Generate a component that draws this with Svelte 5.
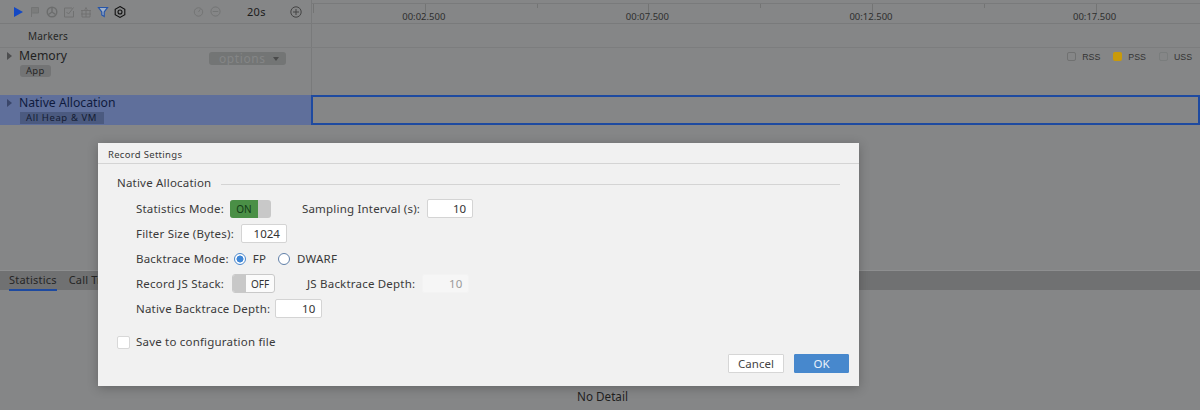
<script>
	const ticks = [0, 1, 2, 3, 4, 5, 6, 7];
	const times = ["00:02.500", "00:07.500", "00:12.500", "00:17.500"];
	const legend = [
		{ label: "RSS", cls: "rss" },
		{ label: "PSS", cls: "pss" },
		{ label: "USS", cls: "uss" },
	];
</script>

<div class="page">
	<div class="top">
		<div class="side toolbar">
			<svg class="ic" width="12" height="12" viewBox="0 0 12 12"><path d="M2 1 L11 6 L2 11 Z" fill="#1348c4" /></svg>
			<svg class="ic" width="12" height="12" viewBox="0 0 12 12"><path d="M2.5 11V1.5h7v5.5h-6" fill="#7b7c7c" stroke="#737474" /></svg>
			<svg class="ic" width="12" height="12" viewBox="0 0 12 12"><circle cx="6" cy="6" r="4.8" fill="none" stroke="#6c6d6d" stroke-width="1.4" /><path d="M6 1.5V6L9.5 8.5M6 6L2.5 8.5" stroke="#6c6d6d" stroke-width="1.4" fill="none" /></svg>
			<svg class="ic" width="12" height="12" viewBox="0 0 12 12"><path d="M9 2H1.5v9h9V5" fill="none" stroke="#707171" /><path d="M3.5 6l2 2L10.5 1.5" fill="none" stroke="#707171" /></svg>
			<svg class="ic" width="12" height="12" viewBox="0 0 12 12"><path d="M1 4.5h10M1 8h10M2 4.5V11h8V4.5M4.5 4.5L6 1.5l1.5 3M6 4.5V11" fill="none" stroke="#707171" stroke-width=".9" /></svg>
			<svg class="ic" width="12" height="12" viewBox="0 0 12 12"><path d="M1.5 1.5h9L7.2 6v4.5L4.8 9V6Z" fill="#9fb0c8" stroke="#2554a8" stroke-width="1.2" /></svg>
			<svg class="ic" width="12" height="12" viewBox="0 0 12 12"><path d="M6 .6L10.8 3.3V8.7L6 11.4L1.2 8.7V3.3Z" fill="none" stroke="#111" stroke-width="1.1" /><circle cx="6" cy="6" r="2" fill="none" stroke="#111" stroke-width="1.1" /></svg>
			<div class="zoom">
				<svg width="11" height="11" viewBox="0 0 12 12"><circle cx="6" cy="6.5" r="4.6" fill="none" stroke="#727373" /><path d="M6 6.5L8 3.5" stroke="#727373" /></svg>
				<svg width="11" height="11" viewBox="0 0 12 12"><circle cx="6" cy="6" r="5" fill="none" stroke="#727373" /><path d="M3 6h6" stroke="#727373" /></svg>
				<span class="dur">20s</span>
				<svg width="12" height="12" viewBox="0 0 12 12"><circle cx="6" cy="6" r="5.2" fill="none" stroke="#444" /><path d="M3 6h6M6 3v6" stroke="#444" /></svg>
			</div>
		</div>
		<div class="ruler">
			<div class="ticks">
				{#each ticks as t}
					<i class:major={t % 2 === 1 || t === 0}></i>
				{/each}
			</div>
			<div class="times">
				{#each times as t}
					<span>{t}</span>
				{/each}
			</div>
		</div>
	</div>

	<div class="lane markers">
		<div class="side"><span class="marker-name">Markers</span></div>
		<div class="plot"></div>
	</div>

	<div class="lane memory">
		<div class="side">
			<span class="caret"></span>
			<div class="names">
				<span class="name">Memory</span>
				<span class="tag">App</span>
			</div>
			<span class="options">options <b></b></span>
		</div>
		<div class="plot legend">
			{#each legend as item}
				<span class="check {item.cls}"></span>
				<span class="legend-label">{item.label}</span>
			{/each}
		</div>
	</div>

	<div class="lane native">
		<div class="side">
			<span class="caret"></span>
			<div class="names">
				<span class="name">Native Allocation</span>
				<span class="tag">All Heap &amp; VM</span>
			</div>
		</div>
		<div class="plot selected"></div>
	</div>

	<div class="spacer"></div>

	<div class="tabs">
		<span class="tab active">Statistics</span>
		<span class="tab">Call Tree</span>
	</div>
	<div class="detail">No Detail</div>
</div>

<div class="dialog">
	<div class="title">Record Settings</div>
	<div class="body">
		<div class="section">
			<span>Native Allocation</span>
			<hr />
		</div>
		<div class="rows">
			<div class="row">
				<span>Statistics Mode:</span>
				<span class="switch on"><em>ON</em><i></i></span>
				<span class="after-switch">Sampling Interval (s):</span>
				<span class="num">10</span>
			</div>
			<div class="row">
				<span>Filter Size (Bytes):</span>
				<span class="num">1024</span>
			</div>
			<div class="row">
				<span>Backtrace Mode:</span>
				<span class="radio checked"></span><span class="opt">FP</span>
				<span class="radio second"></span><span class="opt">DWARF</span>
			</div>
			<div class="row">
				<span>Record JS Stack:</span>
				<span class="switch off"><i></i><em>OFF</em></span>
				<span class="after-off">JS Backtrace Depth:</span>
				<span class="num disabled">10</span>
			</div>
			<div class="row">
				<span>Native Backtrace Depth:</span>
				<span class="num depth">10</span>
			</div>
		</div>
		<div class="save">
			<span class="box"></span>
			<span>Save to configuration file</span>
		</div>
		<div class="actions">
			<button class="cancel">Cancel</button>
			<button class="ok">OK</button>
		</div>
	</div>
</div>

<style>
	:global(body) {
		margin: 0;
		background: #858687;
		overflow: hidden;
	}
	.page {
		width: 1200px;
		height: 410px;
		display: flex;
		flex-direction: column;
		font-family: "Noto Sans", "Open Sans", sans-serif;
		color: #262626;
		background: #858687;
	}
	.side {
		width: 312px;
		flex: none;
		box-sizing: border-box;
		border-right: 1px solid #797a7b;
		display: flex;
	}
	.top {
		display: flex;
		height: 23px;
		border-bottom: 1px solid #797a7b;
	}
	.toolbar {
		align-items: center;
		padding-left: 12px;
		gap: 5px;
	}
	.ic {
		flex: none;
	}
	.zoom {
		margin-left: 62px;
		display: flex;
		align-items: center;
		gap: 6px;
	}
	.dur {
		font-size: 11px;
		width: 17px;
		margin: 0 20px;
		color: #1c1c1c;
		letter-spacing: 0.3px;
	}
	.ruler {
		flex: 1;
		min-width: 0;
		overflow: hidden;
		border-top: 1px solid #797a7b;
		margin-top: 3px;
	}
	.ticks {
		display: flex;
		margin-left: 1px;
	}
	.ticks i {
		width: 111.8px;
		flex: none;
		box-sizing: border-box;
		height: 4px;
		border-left: 1px solid #737474;
	}
	.ticks i.major {
		height: 9px;
	}
	.times {
		display: flex;
		margin-top: -2px;
	}
	.times span {
		width: 223.6px;
		flex: none;
		text-align: center;
		font-size: 9.5px;
		line-height: 12px;
		color: #2e2e2e;
	}
	.lane {
		display: flex;
	}
	.plot {
		flex: 1;
		min-width: 0;
	}
	.markers {
		height: 23px;
		border-bottom: 1px solid #7c7d7e;
	}
	.marker-name {
		font-size: 10px;
		margin-left: 28px;
		line-height: 25px;
		letter-spacing: 0.2px;
	}
	.memory {
		height: 47px;
	}
	.memory .side,
	.native .side {
		padding: 0 0 0 7px;
	}
	.caret {
		width: 0;
		height: 0;
		margin-top: 4px;
		border-left: 5px solid #4d4e4f;
		border-top: 4px solid transparent;
		border-bottom: 4px solid transparent;
	}
	.names {
		margin-left: 7px;
		display: flex;
		flex-direction: column;
		align-items: flex-start;
	}
	.name {
		font-size: 12.2px;
		line-height: 15px;
		color: #1f1f1f;
	}
	.tag {
		font-size: 9.5px;
		line-height: 12px;
		padding: 0 6px;
		margin: 2px 0 0 1px;
		border-radius: 3px;
		background: #737475;
		letter-spacing: 0.3px;
	}
	.options {
		width: 77px;
		height: 13px;
		margin: 4px 25px 0 auto;
		box-sizing: border-box;
		background: #737575;
		border-radius: 3px;
		color: #848586;
		font-size: 12px;
		line-height: 13px;
		padding-left: 10px;
		letter-spacing: 0.6px;
		display: flex;
		align-items: center;
		gap: 7px;
	}
	.options b {
		width: 0;
		height: 0;
		border-top: 4px solid #4a4b4b;
		border-left: 3.5px solid transparent;
		border-right: 3.5px solid transparent;
	}
	.legend {
		display: flex;
		justify-content: flex-end;
		align-items: flex-start;
		padding: 3px 8px 0 0;
	}
	.check {
		width: 9px;
		height: 9px;
		box-sizing: border-box;
		border-radius: 2px;
		margin-top: 1px;
		margin-right: 6px;
	}
	.rss {
		border: 1px solid #707171;
	}
	.pss {
		background: #c99a0a;
	}
	.uss {
		border: 1px solid #7a7d7d;
	}
	.legend-label {
		font-size: 8.8px;
		line-height: 12px;
		margin: 0 13px 0 0;
		color: #333;
		font-family: "Liberation Sans", sans-serif;
	}
	.legend-label:last-child {
		margin-right: 0;
	}
	.native {
		height: 30px;
		background: #5f6f9b;
		color: #101a38;
	}
	.native .name {
		color: #0f1b3e;
	}
	.native .tag {
		background: #4b5a80;
		padding: 0 7px 0 6px;
		color: #141c33;
		letter-spacing: 0.6px;
		border-radius: 0;
	}
	.native .caret {
		border-left-color: #3a466a;
	}
	.native .side {
		width: 311px;
		border-right: 0;
	}
	.selected {
		background: #858687;
		border: 2px solid #1e4aa0;
		box-sizing: border-box;
	}
	.spacer {
		flex: 1;
	}
	.tabs {
		height: 20px;
		box-sizing: border-box;
		background: #707172;
		border-top: 1px solid #8e8f90;
		display: flex;
		gap: 12px;
		padding-left: 9px;
		font-size: 11px;
		line-height: 18px;
	}
	.tab {
		height: 18px;
		letter-spacing: 0.2px;
	}
	.tab.active {
		border-bottom: 2px solid #1e4aa0;
	}
	.detail {
		height: 120px;
		display: flex;
		align-items: flex-end;
		justify-content: center;
		font-size: 11.7px;
		line-height: 20px;
		padding: 0 0 4px 5px;
		color: #1f1f1f;
		box-sizing: border-box;
	}
	.dialog {
		position: absolute;
		left: 98px;
		top: 143px;
		width: 761px;
		height: 243px;
		background: #f1f1f1;
		box-shadow: 0 2px 10px rgba(0, 0, 0, 0.25);
		font-family: "Noto Sans", "Open Sans", sans-serif;
		color: #3a3a3a;
		display: flex;
		flex-direction: column;
		font-size: 11.5px;
	}
	.title {
		height: 20px;
		line-height: 23px;
		padding-left: 10px;
		font-size: 9.5px;
		letter-spacing: 0.3px;
		border-bottom: 1px solid #d4d4d4;
		flex: none;
	}
	.body {
		flex: 1;
		min-height: 0;
		padding: 11px 10px 13px 19px;
		display: flex;
		flex-direction: column;
	}
	.section {
		display: flex;
		align-items: center;
		margin-right: 9px;
		letter-spacing: 0.2px;
		line-height: 16px;
	}
	.section hr {
		flex: 1;
		margin: 2px 0 0 10px;
		border: 0;
		border-top: 1px solid #d4d4d4;
	}
	.rows {
		margin-top: 8px;
		padding-left: 19px;
		display: flex;
		flex-direction: column;
		gap: 6px;
	}
	.row {
		display: flex;
		align-items: center;
		height: 19px;
		letter-spacing: 0.2px;
	}
	.switch {
		display: flex;
		width: 41px;
		height: 18px;
		box-sizing: border-box;
		margin-left: 6px;
		border-radius: 3px;
		overflow: hidden;
		font-size: 10px;
		letter-spacing: 0;
	}
	.switch em {
		font-style: normal;
		text-align: center;
		line-height: 18px;
	}
	.switch.on {
		background: #c8c8c8;
	}
	.switch.on em {
		flex: 0 0 28px;
		background: #4a8f46;
		color: #123b16;
		line-height: 19px;
	}
	.switch.off {
		width: 43px;
		height: 19px;
		margin-left: 8px;
		background: #fbfbfb;
		border: 1px solid #c9c9c9;
	}
	.switch.off i {
		flex: 0 0 13px;
		background: #c8c8c8;
	}
	.switch.off em {
		flex: 1;
		color: #333;
	}
	.after-switch {
		margin-left: 31px;
	}
	.after-off {
		margin-left: 32px;
	}
	.num {
		width: 46px;
		height: 19px;
		box-sizing: border-box;
		margin-left: 7px;
		background: #fff;
		border: 1px solid #d4d4d4;
		border-radius: 2px;
		text-align: right;
		padding-right: 6px;
		line-height: 18px;
		color: #333;
		letter-spacing: 0;
	}
	.num.disabled {
		width: 47px;
		background: #f6f6f6;
		border-color: #f3f3f3;
		color: #9a9a9a;
	}
	.num.depth {
		width: 47px;
		margin-left: 5px;
	}
	.radio {
		width: 12px;
		height: 12px;
		box-sizing: border-box;
		border: 1px solid #4c88cc;
		border-radius: 50%;
		background: #fff;
		margin-left: 5px;
		margin-right: 7px;
	}
	.radio.checked {
		background: radial-gradient(circle, #3f86d6 0 3.2px, #fff 3.8px);
	}
	.radio.second {
		margin-left: 12px;
		border-color: #5f7fa8;
	}
	.save {
		margin-top: 17px;
		display: flex;
		align-items: center;
		gap: 6px;
		letter-spacing: 0.2px;
		line-height: 14px;
	}
	.box {
		width: 13px;
		height: 13px;
		box-sizing: border-box;
		background: #fff;
		border: 1px solid #d8d8d8;
		border-radius: 2px;
	}
	.actions {
		display: flex;
		justify-content: flex-end;
		gap: 10px;
		margin-top: auto;
	}
	button {
		width: 56px;
		height: 19px;
		padding: 0;
		font: inherit;
		border-radius: 1px;
	}
	.cancel {
		background: #fff;
		border: 1px solid #d6d6d6;
		color: #444;
	}
	.ok {
		width: 55px;
		background: #4788cd;
		border: 1px solid #4788cd;
		color: #eaf2fb;
	}
</style>
